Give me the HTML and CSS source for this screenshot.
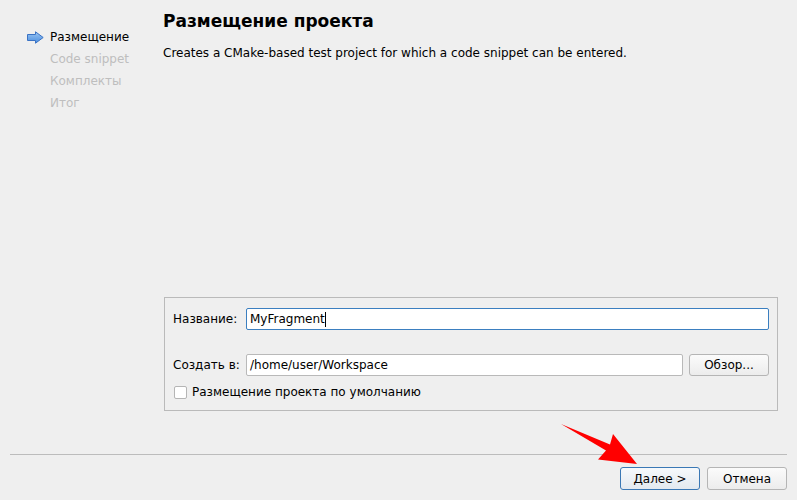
FILE: index.html
```html
<!DOCTYPE html>
<html lang="ru">
<head>
<meta charset="utf-8">
<title>Размещение проекта</title>
<link rel="stylesheet" href="styles.css">
</head>
<body>
<div class="wizard">
  <div class="main">
    <ul class="steps">
      <li class="step active">
        <svg class="step-icon" width="17" height="13" viewBox="0 0 17 13">
          <defs>
            <linearGradient id="ag" x1="0" y1="0" x2="0" y2="1">
              <stop offset="0" stop-color="#9cc6f2"/>
              <stop offset="1" stop-color="#4a8ee0"/>
            </linearGradient>
          </defs>
          <path d="M0.5 3.5 H8.5 V0.8 L16.2 6.5 L8.5 12.2 V9.5 H0.5 Z" fill="url(#ag)" stroke="#3a72c4" stroke-width="1" stroke-linejoin="round"/>
        </svg>
        <span>Размещение</span>
      </li>
      <li class="step"><span>Code snippet</span></li>
      <li class="step"><span>Комплекты</span></li>
      <li class="step"><span>Итог</span></li>
    </ul>
    <div class="content">
      <h1 class="title">Размещение проекта</h1>
      <p class="desc">Creates a CMake-based test project for which a code snippet can be entered.</p>
      <div class="group">
        <div class="row">
          <label class="lbl">Название:</label>
          <div class="field focused"><span>MyFragment</span><span class="caret"></span></div>
        </div>
        <div class="row row-gap">
          <label class="lbl">Создать в:</label>
          <div class="field"><span>/home/user/Workspace</span></div>
          <button class="btn browse">Обзор...</button>
        </div>
        <div class="check-row">
          <span class="checkbox"></span>
          <span>Размещение проекта по умолчанию</span>
        </div>
      </div>
    </div>
  </div>
  <div class="footer">
    <button class="btn default"><u>Д</u>алее &gt;</button>
    <button class="btn">Отмена</button>
  </div>
</div>
<svg class="pointer" width="797" height="500" viewBox="0 0 797 500">
  <polygon points="561,424 610,444.5 613,434 637,464 598,459.5 606,450.5" fill="#ff0000"/>
</svg>
</body>
</html>
```

FILE: styles.css
```css
html, body {
  margin: 0;
  padding: 0;
}
body {
  width: 797px;
  height: 500px;
  background: #efefef;
  font-family: "DejaVu Sans", "Liberation Sans", sans-serif;
  font-size: 12px;
  color: #000;
  position: relative;
  overflow: hidden;
}
.wizard {
  display: flex;
  flex-direction: column;
  height: 500px;
}
.main {
  display: flex;
  height: 454px;
}
.steps {
  list-style: none;
  margin: 0;
  padding: 26px 0 0 0;
  width: 163px;
  flex: none;
}
.step {
  height: 22px;
  line-height: 22px;
  padding-left: 50px;
  color: #bebebe;
  position: relative;
  white-space: nowrap;
}
.step.active {
  color: #000;
}
.step-icon {
  position: absolute;
  left: 27px;
  top: 5px;
}
.content {
  flex: 1;
  display: flex;
  flex-direction: column;
  padding: 11px 18px 43px 0;
  min-width: 0;
}
.title {
  margin: 0;
  font-size: 17px;
  font-weight: bold;
  line-height: 20px;
}
.desc {
  margin: 15px 0 0 0;
  line-height: 14px;
}
.group {
  margin: auto 1px 0 1px;
  border: 1px solid #bababa;
  padding: 10px 8px 9px 8px;
  display: flex;
  flex-direction: column;
}
.row {
  display: flex;
  align-items: center;
  height: 22px;
}
.row-gap {
  margin-top: 24px;
}
.lbl {
  width: 73px;
  flex: none;
  white-space: nowrap;
}
.field {
  flex: 1;
  height: 22px;
  box-sizing: border-box;
  background: #fff;
  border: 1px solid #b9b9b9;
  border-radius: 2px;
  padding: 0 3px;
  display: flex;
  align-items: center;
  white-space: nowrap;
}
.field.focused {
  border-color: #3b7fc0;
}
.caret {
  display: inline-block;
  width: 1px;
  height: 15px;
  background: #000;
}
.btn {
  font-family: inherit;
  font-size: 12px;
  color: #000;
  height: 22px;
  width: 80px;
  box-sizing: border-box;
  border: 1px solid #b5b5b5;
  border-radius: 3px;
  background: linear-gradient(#fbfbfb, #ececec);
  padding: 0;
  flex: none;
}
.browse {
  margin-left: 6px;
}
.check-row {
  margin-top: 7px;
  height: 18px;
  display: flex;
  align-items: center;
  padding-left: 1px;
}
.checkbox {
  width: 13px;
  height: 13px;
  box-sizing: border-box;
  background: #fff;
  border: 1px solid #b5b5b5;
  border-radius: 2px;
  margin-right: 5px;
}
.footer {
  margin: 0 10px 0 10px;
  border-top: 1px solid #bcbcbc;
  padding-top: 12px;
  display: flex;
  justify-content: flex-end;
  gap: 7px;
}
.footer .btn {
  height: 23px;
}
.footer .btn.default {
  border-color: #3a78b5;
  background: linear-gradient(#f6f9fc, #e3e9ef);
}
.pointer {
  position: absolute;
  left: 0;
  top: 0;
  pointer-events: none;
}
```
